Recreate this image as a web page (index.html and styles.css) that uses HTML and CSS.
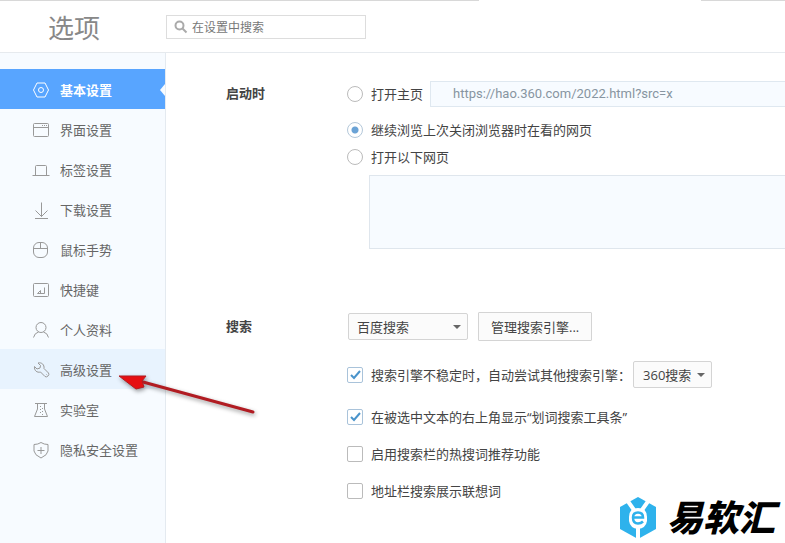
FILE: index.html
```
<!DOCTYPE html>
<html lang="zh-CN">
<head>
  <meta charset="UTF-8">
  <meta name="viewport" content="width=device-width, initial-scale=1.0">
  <title>选项</title>
  <link rel="stylesheet" href="styles.css">
</head>
<body>
  <div class="tab-edge"><span class="edge-left"></span><span class="edge-right"></span></div>

  <header class="header">
    <h1>选项</h1>
    <label class="search">
      <svg width="14" height="14" viewBox="0 0 14 14" fill="none" stroke="#aaa" stroke-width="2"><circle cx="5.5" cy="5.5" r="4"/><path d="M8.5 8.5l4 4"/></svg>
      <input type="text" placeholder="在设置中搜索" aria-label="在设置中搜索">
    </label>
  </header>

  <div class="page">
    <nav class="sidebar">
      <a href="#basic" class="nav-item active">
        <svg class="icon" viewBox="0 0 18 18"><path d="M5 2h8L16.500 9 13 16H5L1.500 9z"/><circle cx="9" cy="9" r="2.500"/></svg>
        基本设置
      </a>
      <a href="#ui" class="nav-item">
        <svg class="icon" viewBox="0 0 18 18"><rect x="1.500" y="2.500" width="15" height="13" rx="1"/><path d="M1.500 6.500h15M10 4.500h1M12 4.500h1M14 4.500h1"/></svg>
        界面设置
      </a>
      <a href="#tabs" class="nav-item">
        <svg class="icon" viewBox="0 0 18 18"><path d="M.5 14.500h17M3.500 14.500v-9q0-1 1-1h9q1 0 1 1v9"/></svg>
        标签设置
      </a>
      <a href="#download" class="nav-item">
        <svg class="icon" viewBox="0 0 18 18"><path d="M9.500 1.500v14M3.500 9.500l6 6 6-6M3 17.500h13"/></svg>
        下载设置
      </a>
      <a href="#mouse" class="nav-item">
        <svg class="icon" viewBox="0 0 18 18"><rect x="1.500" y="1.500" width="14" height="15" rx="5.500"/><path d="M1.500 7.500h14M8.500 1.500v6"/></svg>
        鼠标手势
      </a>
      <a href="#keys" class="nav-item">
        <svg class="icon" viewBox="0 0 18 18"><rect x="1.500" y="2.500" width="15" height="13" rx="1"/><path d="M12.500 6.500v6h-7l3-3v3"/></svg>
        快捷键
      </a>
      <a href="#profile" class="nav-item">
        <svg class="icon" viewBox="0 0 18 18"><circle cx="9" cy="6.500" r="5"/><path d="M1.500 16.500q1-4.500 5-5.500M16.500 16.500q-1-4.500-5-5.500"/></svg>
        个人资料
      </a>
      <a href="#advanced" class="nav-item hover">
        <svg class="icon" viewBox="0 0 18 18"><path d="M6 2l2.500 2.500-.5 2.500-3 1-2.500-2.500c-.5 4 2.500 6.500 6 5.500l4.500 4.500q1.500 1 3-.5t.5-3L12 7.500C12.500 4 10 1 6 2zM14 13.500h.5"/></svg>
        高级设置
        <svg class="arrow" width="146" height="50" viewBox="0 0 146 50">
          <path d="M26 11L136 41" stroke="#b11c22" stroke-width="3" stroke-linecap="round"/>
          <path d="M2 5L29 5 25 10 27 16 19 18z" fill="#e60f12" stroke="#b11c22"/>
        </svg>
      </a>
      <a href="#lab" class="nav-item">
        <svg class="icon" viewBox="0 0 18 18"><path d="M3 2.500h12M5.500 2.500V8L2.500 15.500h13L12.500 8V2.500"/><path d="M8.500 5v9M10.500 7v7" stroke-dasharray="1 2"/></svg>
        实验室
      </a>
      <a href="#privacy" class="nav-item">
        <svg class="icon" viewBox="0 0 18 18"><path d="M9 1.500q3 2 7 2V10q-.5 4-7 7-6.500-3-7-7V3.500q4 0 7-2zM5.500 9.500h7M9 6v7"/></svg>
        隐私安全设置
      </a>
    </nav>

    <main class="content">
      <section class="section">
        <h2>启动时</h2>
        <div class="options">
          <div class="row row-home">
            <label class="choice"><input type="radio" name="startup">打开主页</label>
            <input class="url" type="text" value="https://hao.360.com/2022.html?src=x" aria-label="主页地址">
          </div>
          <div class="row">
            <label class="choice"><input type="radio" name="startup" checked>继续浏览上次关闭浏览器时在看的网页</label>
          </div>
          <div class="row">
            <label class="choice"><input type="radio" name="startup">打开以下网页</label>
          </div>
          <textarea class="pages" aria-label="打开以下网页"></textarea>
        </div>
      </section>

      <section class="section">
        <h2>搜索</h2>
        <div class="options">
          <div class="row row-engine">
            <select class="engine" aria-label="搜索引擎"><option>百度搜索</option></select>
            <button type="button">管理搜索引擎...</button>
          </div>
          <div class="row row-fallback">
            <label class="choice"><input type="checkbox" checked>搜索引擎不稳定时，自动尝试其他搜索引擎：</label>
            <select class="fallback" aria-label="其他搜索引擎"><option>360搜索</option></select>
          </div>
          <div class="row row-check">
            <label class="choice"><input type="checkbox" checked>在被选中文本的右上角显示“划词搜索工具条”</label>
          </div>
          <div class="row row-check">
            <label class="choice"><input type="checkbox">启用搜索栏的热搜词推荐功能</label>
          </div>
          <div class="row row-check">
            <label class="choice"><input type="checkbox">地址栏搜索展示联想词</label>
          </div>
        </div>
      </section>
    </main>
  </div>

  <div class="brand">
    <svg width="38" height="42" viewBox="0 0 38 42">
      <path d="M19 0L37 10V32L19 42 1 32V10z" fill="#2eb2ec"/>
      <path d="M8 3L15 13M30 3L23 13M19 29V42" fill="none" stroke="#fff" stroke-width="4"/>
      <path d="M10 20q0-9 9-9t9 9v4q-1 7-9 8-8-1-9-8z" fill="#fff"/>
      <path d="M14 20.500h10q0-5-5-5t-5 5q0 6 5 6 3 0 5-2" fill="none" stroke="#2eb2ec" stroke-width="2.500"/>
    </svg>
    <span>易软汇</span>
  </div>
</body>
</html>
```
FILE: styles.css
```
* {
  box-sizing: border-box;
}
body {
  margin: 0;
  min-height: 100vh;
  display: flex;
  flex-direction: column;
  position: relative;
  overflow-x: hidden;
  background: #fff;
  color: #444;
  font-family: "Open Sans", "Noto Sans CJK SC", sans-serif;
  font-size: 13px;
  line-height: 20px;
}
input, select, button, textarea {
  font: inherit;
  color: inherit;
  margin: 0;
}

/* bottom edge of the browser tabs */
.tab-edge {
  display: flex;
  justify-content: space-between;
  height: 1px;
}
.edge-left {
  width: 61%;
  background: #d8d8d8;
}
.edge-right {
  width: 84px;
  background: #d8d8d8;
}

.header {
  display: flex;
  align-items: center;
  height: 52px;
  border-bottom: 1px solid #e6eaee;
}
h1 {
  width: 166px;
  margin: 0;
  padding: 2px 0 0 48px;
  font-size: 26px;
  line-height: 36px;
  font-weight: 400;
  color: #888;
}
.search {
  display: flex;
  align-items: center;
  gap: 4px;
  width: 200px;
  height: 24px;
  padding: 0 7px;
  border: 1px solid #ddd;
}
.search input {
  flex: 1;
  min-width: 0;
  padding: 2px 0 0;
  border: 0;
  outline: 0;
  background: none;
  font-size: 12px;
}
.search input::placeholder {
  color: #777;
}

.page {
  flex: 1;
  display: flex;
}
.sidebar {
  width: 166px;
  padding-top: 16px;
  background: #f7fbff;
  border-right: 1px solid #e4eaf0;
}
.nav-item {
  position: relative;
  display: flex;
  align-items: center;
  gap: 10px;
  height: 40px;
  padding: 1px 0 0 32px;
  color: #666;
  text-decoration: none;
}
.nav-item.active {
  background: #58a5ff;
  color: #fff;
  font-weight: bold;
}
.nav-item.active::after {
  content: "";
  position: absolute;
  right: 0;
  border: 6px solid transparent;
  border-left-width: 0;
  border-right: 5px solid #f7fbff;
}
.nav-item.hover {
  background: #e8f3fe;
}
.icon {
  width: 18px;
  height: 18px;
  fill: none;
  stroke: #999;
}
.active .icon {
  stroke: #fff;
}
.arrow {
  position: absolute;
  left: 117px;
  top: 22px;
  z-index: 1;
  filter: drop-shadow(1px 2px 2px #0006);
}

.content {
  flex: 1;
  min-width: 0;
  padding: 27px 0 0 60px;
}
.section {
  display: flex;
  margin-bottom: 64px;
}
.section:last-child {
  margin-bottom: 0;
}
h2 {
  width: 121px;
  margin: 0;
  font-size: 13px;
  line-height: 27px;
  color: #444;
}
.options {
  flex: 1;
  min-width: 0;
}
.row {
  display: flex;
  align-items: center;
  height: 27px;
}
.choice {
  display: flex;
  align-items: center;
  gap: 8px;
  white-space: nowrap;
}
.choice input {
  appearance: none;
  width: 16px;
  height: 16px;
  border: 1px solid #bbb;
  border-radius: 2px;
  background: #fff;
}
.choice input[type="radio"] {
  border-radius: 50%;
}
.choice input[type="radio"]:checked {
  border-color: #b4c8da;
  background: radial-gradient(circle, #6ba3d6 3px, #fff 4px);
}
.choice input[type="checkbox"]:checked {
  border-color: #a9c3da;
  background: #fff url("data:image/svg+xml,%3Csvg xmlns='http://www.w3.org/2000/svg' viewBox='0 0 14 14'%3E%3Cpath d='M3 7l3 3 6-7' fill='none' stroke='%234a94cb' stroke-width='2'/%3E%3C/svg%3E");
}
.row-home {
  gap: 7px;
  margin-bottom: 9px;
}
.url {
  flex: 1;
  min-width: 0;
  height: 26px;
  padding: 0 22px;
  border: 1px solid #dfe8f0;
  border-right: 0;
  background: #f7fbff;
  color: #8795a1;
  font-family: Roboto, sans-serif;
}
.pages {
  display: block;
  width: calc(100% - 22px);
  height: 74px;
  margin: 5px 0 0 22px;
  border: 1px solid #dfe6ed;
  border-right: 0;
  background: #f7fbff;
  resize: none;
}

select {
  appearance: none;
  height: 27px;
  padding: 0 9px;
  border: 1px solid #d4d4d4;
  border-radius: 2px;
  background: url("data:image/svg+xml,%3Csvg xmlns='http://www.w3.org/2000/svg' width='8' height='4'%3E%3Cpath d='M0 0h8l-4 4z' fill='%23666'/%3E%3C/svg%3E") no-repeat right 6px center, #fbfbfb;
}
.engine {
  width: 120px;
  padding: 0 8px;
}
.fallback {
  width: 79px;
}
button {
  height: 29px;
  padding: 0 12px;
  border: 1px solid #d4d4d4;
  border-radius: 1px;
  background: #fbfbfb;
}
.row-engine {
  gap: 10px;
  padding-left: 1px;
  margin-bottom: 21px;
}
.row-fallback {
  gap: 2px;
  margin-bottom: 15px;
}
.row-check {
  margin-bottom: 10px;
}

.brand {
  position: absolute;
  right: 10px;
  bottom: 4px;
  display: flex;
  align-items: center;
  gap: 10px;
  color: #000;
  font-size: 36px;
  line-height: 42px;
  font-weight: 900;
  font-style: italic;
}
```
